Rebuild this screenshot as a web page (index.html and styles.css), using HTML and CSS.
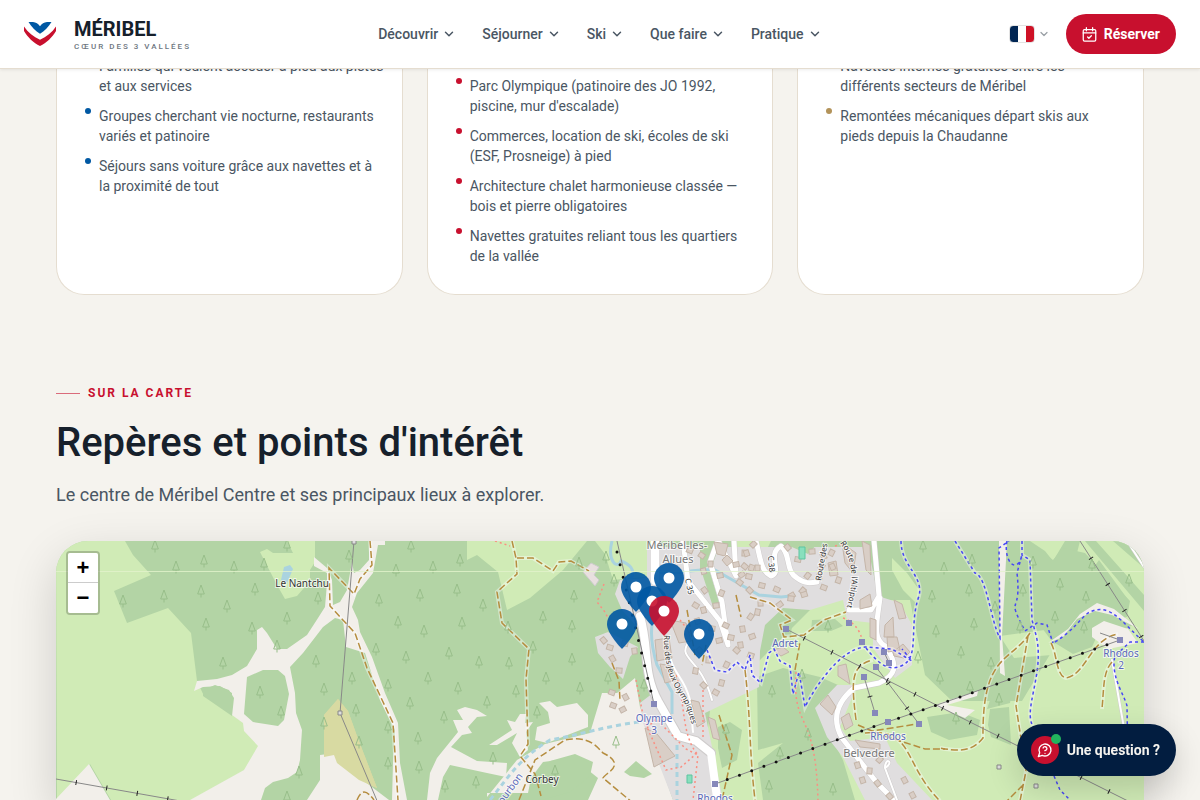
FILE: index.html
```html
<!DOCTYPE html>
<html lang="fr">
<head>
<meta charset="utf-8">
<meta name="viewport" content="width=device-width, initial-scale=1">
<title>Méribel – Cœur des 3 Vallées</title>
<link rel="stylesheet" href="styles.css">
</head>
<body>
<svg class="defs" aria-hidden="true">
  <symbol id="chevron" viewBox="0 0 24 24"><path d="m6 9 6 6 6-6" fill="none" stroke="currentColor" stroke-width="2.500" stroke-linecap="round" stroke-linejoin="round"/></symbol>
  <symbol id="pin" viewBox="0 0 30 40"><path d="M15 0C7 0 0 6.700 0 15c0 10 15 25 15 25s15-15 15-25C30 6.700 23 0 15 0z" fill="currentColor" fill-opacity=".9"/><circle cx="15" cy="15" r="5.500" fill="#fff"/></symbol>
</svg>

<header class="header">
  <a class="brand" href="#">
    <svg class="brand-mark" viewBox="0 0 32 24" aria-hidden="true">
      <path d="M4.500 0H9c3 .2 5.200 1.800 7 4.200C17.800 1.800 20 .2 23 0h4.500C24.500 5 20.500 8.800 16 11.800 11.500 8.800 7.500 5 4.500 0z" fill="#0058a3"/>
      <path d="M0 4.500c4 6 9.500 10 16 13.200 6.500-3.200 12-7.200 16-13.200v4.500C28.500 15 22.500 21 16 24 9.500 21 3.500 15 0 9z" fill="#c8102e"/>
    </svg>
    <span class="brand-text"><span class="brand-name">MÉRIBEL</span><span class="brand-tag">CŒUR DES 3 VALLÉES</span></span>
  </a>
  <nav class="nav" aria-label="Navigation principale">
    <button class="nav-item" type="button">Découvrir<svg class="chev"><use href="#chevron"/></svg></button>
    <button class="nav-item" type="button">Séjourner<svg class="chev"><use href="#chevron"/></svg></button>
    <button class="nav-item" type="button">Ski<svg class="chev"><use href="#chevron"/></svg></button>
    <button class="nav-item" type="button">Que faire<svg class="chev"><use href="#chevron"/></svg></button>
    <button class="nav-item" type="button">Pratique<svg class="chev"><use href="#chevron"/></svg></button>
  </nav>
  <div class="actions">
    <button class="lang" type="button" aria-label="Langue : français"><span class="flag"></span><svg class="chev chev-small"><use href="#chevron"/></svg></button>
    <a class="book" href="#"><svg class="book-icon" viewBox="0 0 24 24" fill="none" stroke="currentColor" stroke-width="2" stroke-linecap="round" stroke-linejoin="round" aria-hidden="true"><path d="M7 1v5M17 1v5M2 9.500h20"/><rect x="2" y="4" width="20" height="18.500" rx="2"/><path d="m9 16 2 2 4-4"/></svg>Réserver</a>
  </div>
</header>

<main class="page">
  <section class="cards">
    <article class="card card-blue">
      <ul class="list">
        <li>Familles qui veulent accéder à pied aux pistes et aux services</li>
        <li>Groupes cherchant vie nocturne, restaurants variés et patinoire</li>
        <li>Séjours sans voiture grâce aux navettes et à la proximité de tout</li>
      </ul>
    </article>
    <article class="card card-red">
      <ul class="list">
        <li>Parc Olympique (patinoire des JO 1992, piscine, mur d'escalade)</li>
        <li>Commerces, location de ski, écoles de ski (ESF, Prosneige) à pied</li>
        <li>Architecture chalet harmonieuse classée — bois et pierre obligatoires</li>
        <li>Navettes gratuites reliant tous les quartiers de la vallée</li>
      </ul>
    </article>
    <article class="card card-gold">
      <ul class="list">
        <li>Navettes internes gratuites entre les différents secteurs de Méribel</li>
        <li>Remontées mécaniques départ skis aux pieds depuis la Chaudanne</li>
      </ul>
    </article>
  </section>

  <section class="places">
    <p class="eyebrow">SUR LA CARTE</p>
    <h2 class="title">Repères et points d'intérêt</h2>
    <p class="lead">Le centre de Méribel Centre et ses principaux lieux à explorer.</p>
    <div class="map">
      <svg class="map-canvas" viewBox="56 541 1088 259" preserveAspectRatio="xMinYMin slice" role="img" aria-label="Carte de Méribel Centre">
        <defs>
          <marker id="tree" viewBox="-6 -8 12 16" markerWidth="12" markerHeight="16" markerUnits="userSpaceOnUse"><path d="M0-6 3.300 3h-6.600zM0 3v3.500" fill="none" stroke="#98be8a" stroke-width="1"/></marker>
          <marker id="station" viewBox="-3 -3 6 6" markerWidth="6" markerHeight="6" markerUnits="userSpaceOnUse"><path d="M-3-3h6v6h-6z" fill="#8688ba"/></marker>
          <marker id="house" viewBox="-4 -4 8 8" markerWidth="8" markerHeight="8" markerUnits="userSpaceOnUse" orient="auto"><path d="M-3-2h6v5h-6z" fill="#d9cec6" stroke="#c4b5a8" stroke-width="1"/></marker>
          <marker id="pylon" viewBox="-3 -3 6 6" markerWidth="6" markerHeight="6" markerUnits="userSpaceOnUse"><path d="M-2-2h4v4h-4z" fill="#ddd" stroke="#888"/></marker>
          <path id="rue-jeux" d="M664 635C663 660 670 680 678 692S689 712 692 727"/>
          <path id="route-altiport" d="M840 543C851 558 856 575 847 606"/>
        </defs>
        <path class="forest" d="M0 500h1300v400H0z"/>

        <g class="grass">
          <path d="M56 541h69l8 14 18 20-37 16 13 32 41-15 23 25 6 48 7 15 29 19 11 8 1 8 14 15-14 24-54 30h-80l-21-36-33 36z"/>
          <path d="M287 541h28v21l-5 8v11l-13 15-12 3-8-14-17-33 7-3 6 4h20z"/>
          <path d="M467 541h120l-24 29-33 28-23 12-9-38-21-17-10 5z"/>
          <path d="M595 541h60v35l-42 4-8-26z"/>
          <path d="M710 710l50-50 60-60h90l15 75 27 26h70l30-50 130-50v200H700z"/>
          <path d="M731 541h40l-20 40-15-15zM892 558l15 15 13 18-5 11-12-12-11-20z"/>
          <path d="M1030 541h35l-12 20-8-10zM1080 541h64v90l-20-8 5-22-30-41-20 28-10-3z"/>
          <path d="M1000 636l60-8 84-10v30l-130 10z"/>
        </g>
        <g class="forest">
          <path d="M1003 541h25l25 19 10-12 22 5 45 48-3 16-32-3-18 16-23 14-15-20-12 2-24 7z"/>
          <path d="M1085 541h11l48 54v16zM1113 541h18l13 15v12z"/>
          <path d="M1055 643l13-10 20-20 17-4 28 16-10 5-22-3-9 20-19 7zM993 691l20-4-3 16-23 6zM990 709l19-2 2 38-20-8-3-12z"/>
          <path d="M783 668l37 9 18 8-21 25 26 50 12 40h-92l-5-37 25-20-25 7-1-73zM812 620l23-1 8 7-12 5h-20z"/>
          <path d="M718 727l12-5 12 8-5 30-15 8-4-20zM927 717l33-5 20 8-3 15-28 5-18-8zM776 618l17-10-2 30-18-5z"/>
        </g>
        <path d="M324 715l14-16 10 12 9 25 20 52-15-6-30-23z" fill="#d8daa2"/>

        <g class="bare">
          <path d="M56 799l33-35 21 36H56zM197 681l20-2 15-4 15-9 10-17v-19l5-3 5 6 10 16h10l20-14 11-17 7-11 2-24v-10l-13-7v-9l13 11 5 12 1 25 7-3 7-12 5-28 2 11 6-3 9-10v-19h16v4h-7l-5 28-16 20-5 14 6 13 2 12 12 25 13 36 13 30 2 40 7 37h-15l1-37 2-33-15-30-15-47-19-6-3-27-8-2-12 9-20 26-13 14 5 26 1 20 6 17-2 30-3 12-9 6-15 4-8 6-4 12h-71l54-30 14-24-14-15-1-8-11-8v-22l-12-7-17 1-9 4z"/>
          <path d="M393 803h-88l15-23v-25l8-1 12 2 12 16z"/>
          <path d="M457 710l8-3 12 3 10 6-10 1-9 10 4 6-10 2-11 12 26 14 30 2-1 14-19-4-37-8-7 12-5 23h-11l3-27 7-15 21-26-5-12h10z"/>
          <path d="M489 745l23-15-5-10 8 2 5-8h6l-1 9 8-1-7 10 2 18-8 7-8-14 5-10-20 12zM539 703l11-2 7 6 20-4 11 12v12l-41 16-12-3 2-13 13-4-2-11z"/>
          <path d="M487 797l30-37 28-16 45-11 12-40h15l18-15 5 29 33 93H588l10-22-25-20-30 4-12 16-3 15h-41z"/>
          <path d="M999 541h8l-5 95 3 40-5-3zM940 703l38-12-1 5-30 9 28 5-10 8-30-12z"/>
          <path d="M1048 643l20-14 12-15 17-11 17 6 25 20-27-14-17-4-18 8-14 18zM1092 628l12-7 24 8 10 14-30 6-16-12z"/>
        </g>
        <path class="forest" d="M203 690l12-5 14 5 5 8-2 18-29-20zM247 677l16-7h15l7 6 4 18-5 26-6 6-25-4-9-8zM550 761l25-7 18 8-3 14-20 16-28 8h-14l5-18zM624 772l12-11 16 13-8 4-14-2z"/>
        <path d="M324 715l14-16 10 12 9 25 20 52-18-8-22-17-3-8-10 2z" fill="#d8daa2"/>

        <g fill="#e0dedf">
          <path d="M620 580l-5 14 7 16 18 20v20l13 43-13 10 3 20 30 77h50l-18-87 54-26 1-36 5-26 18-17 27 2 33-10 4 20 26 3 0 25 22 30 17-13v-40l-12-22-22-7-10-49H647v31z"/>
          <path d="M595 637l13-5 30 15-8 10-7 22-13-12-12-14zM815 708l22-23h20l-17 42 10 14 35-4 12 26 35 37h-67l-22-43-16-20z"/>
        </g>
        <path class="forest" d="M700 541h21l-8 22-13 8zM702 573l7-4 10 33-5 8zM778 541h42l-12 13z"/>
        <path class="water" d="M612 541c-5 20 5 29 9 20 8 3 15 8 10 18M655 571c20 6 35-3 60-1l14 8 30 17 22 2 10-1M652 625c-2 15 2 30 5 40l15 27v22"/>
        <path d="M284 567l6-2 3 4-6 14-6-3z" fill="#aad3df"/>
        <path class="water-dash" d="M490 800c20-25 30-42 60-60 25-4 60-15 90-18M677 745v55"/>

        <path class="roads-case" d="M683 541l5 40 32 40 8 24-6-43-12-40 8-22 18 36-2-35M756 541c5 20 5 30 15 35 12-3-5-22 10-30 10 8 4 25 16 32 8 6 14 5 20 4M874 541l5 55-8 14h-22M880 598c-3 25-8 40 5 48 15 20 10 30-6 37l-25 5c-18 15-22 32-12 50l35 45 20 20"/>
        <path class="roads" d="M683 541l5 40 32 40 8 24-6-43-12-40 8-22 18 36-2-35M756 541c5 20 5 30 15 35 12-3-5-22 10-30 10 8 4 25 16 32 8 6 14 5 20 4M874 541l5 55-8 14h-22M880 598c-3 25-8 40 5 48 15 20 10 30-6 37l-25 5c-18 15-22 32-12 50l35 45 20 20"/>
        <path class="roads-case lane" d="M690 640c-15 20 10 15 22 60M885 768c0-12 10-6 0 0l12 32M1112 660l12 68M1127 541l17 26"/>
        <path class="roads lane" d="M690 640c-15 20 10 15 22 60M667 640c5 40 15 30 23 60l3 32M885 768c0-12 10-6 0 0l12 32M1112 660l12 68M1127 541l17 26"/>
        <path class="roads-case valley" d="M640 616c10 35 2 55 18 85l20 35 18 5 15 12"/>
        <path class="roads valley" d="M655 541v40M640 616c10 35 2 55 18 85l20 35 18 5 15 12 8 60"/>

        <g class="building">
          <path d="M655 640l14-2 3 20-15 3zM660 664l12 2 5 14-12 3zM645 728l12 6 18 22-8 4-13 7zM691 700l8 2 6 20-8 5zM670 620l16 3 5 18-12 2zM722 560l5-5 6 6-6 5zM714 542l14 2-3 12-8-2zM828 563l8-2 2 14-8 1zM842 543l14 10-3 20-8-10zM862 541l8 4 1 30-5-5zM860 600l10-6 2 12-12 3zM885 625l8-8 1 20h-10zM894 600l8 4 4 14-7 1zM893 652l10-8 7 8-6 6-10-2zM838 666l8-2 4 20-12-8zM820 704l8-9 8 12-4 8zM841 718l8-5 4 12-8 5zM855 740l25 4v5l-20-2zM708 717l7 3 5 20-7-2zM773 650l10-3 6 5-8 4zM870 618l6 2v20l-6-3zM887 637h10l3 13-12 2z"/>
          <path fill="none" stroke="none" marker-start="url(#house)" marker-mid="url(#house)" marker-end="url(#house)" d="M604 640l6 7 15-4 10 8-16 20-7-12M612 692l14 5-3 13-10-4M690 550l12 5 9 9-7 7 16 4 16-11 9 2 4 10 8-8-13-15 9-9M696 605l8 5-6 11 14 7 14-3 11 25 14 5M705 590l11 15 5-12M740 582l10 8 11 13-10 14-8 12 9 7 5-24M788 547l10 12 14-8 12 5-2 11-14 9-5 15-11 5-12 9M747 553l5 15-10 7M762 585l15 4 14 9 13-4M700 650l9 10-13 11 8 14 12 7M719 640l12-3 10 8-14 20-5 18M832 553l-12 24 4 10 14-7-6-13M880 760l-10 11 8 12 12 13M858 765l5 15M905 780l8 15"/>
        </g>
        <path d="M583 572l8-9 8 4-5 8 5 5-4 6z" fill="#e8dfdf" stroke="#ccc"/>
        <path d="M799 547h6v12h-6zM687 775h5v8h-5z" fill="#88dfbd" stroke="#5cc5a1"/>

        <g class="trail-glow"><path d="M370 541l2 24-12 14-6 15-25-26 1 38 25 27 12 35 26 55 5 77M512 541l4 17 1 16-20 18 5 31 27 26-3 30 2 65-8 12M517 558h16l20 13 6-9 12-1 18 10M750 597l20 6 22 17-12 5 4 12 20-2 20-15 22-8M745 670c6 50 4 80 10 130M856 720c-5-40-5-55 17-60M865 733c50-5 37 30 75 68M1030 633c-20 30-48 20-47 105-12 15-26 13-43 10M1028 636l-12 70 10 65-6 30M1051 643c6 10 5 33 15 35 20-3 25-40 52-44M1112 662c-9 10-8 25-10 47"/>
          <path d="M707 650l8 20 12 2 10-10 8 8 5-15 2 20 9 8 8-30 5-4 6 12 10 5 3 28 6-22 6 35c10-20 35-58 60-60l27 2 20 12M866 648c8 10 20 25 35 18 20-8 7-40 18-70 5-20-18-30-18-55M955 541l20 32c12 3 16 50 25 65M1022 541v14l8 5 2 60 4 15c10 40-17 80 0 95l5 15"/></g>
        <g class="trail">
          <path d="M370 541l2 24-12 14-6 15-25-26 1 38 25 27 12 35 26 55 5 77M512 541l4 17 1 16-20 18 5 31 27 26-3 30 2 65-8 12 15 18 6 22M517 558h16l20 13 6-9 12-1 18 10M519 800l16-40 30-20c24-5 32 7 38 13 25 12 2 20 0 25l30 25"/>
          <path d="M750 597l20 6 22 17-12 5 4 12 20-2 20-15 22-8 M795 670l5-28M745 670c6 50 4 80 10 130M856 720c-5-40-5-55 17-60M858 725l14 6 45-7M865 733c50-5 37 30 75 68M885 736l40 13h20"/>
          <path d="M1030 633c-20 30-48 20-47 105-12 15-26 13-43 10M1028 636l-12 70 10 65-6 30M1051 643c6 10 5 33 15 35 20-3 25-40 52-44M1112 662c-9 10-8 25-10 47M1023 785l-18 18M357 800c5-12 10-9 17 0M612 663l7 18 1 20M719 715l13 40-10 45M687 610l8 45M736 595l5 22M706 645l-4 20"/>
        </g>
        <g class="foot">
          <path d="M495 541l15 5M604 584l-7 18 8 10 5 10M636 680l8 40 22 50 15-3 15-13-10-5-30-30-10 10M680 620l13 16M676 675c10 30 5 60 22 80l-5 45M843 618c15 5 20 20 19 25M796 672c-4 60 20 35 22 130M835 546l10-2M703 690v50"/>
        </g>
        <g class="piste">
          <path d="M707 650l8 20 12 2 10-10 8 8 5-15 2 20 9 8 8-30 5-4 6 12 10 5 3 28 6-22 6 35c10-20 35-58 60-60l27 2 20 12-10-12M866 648c8 10 20 25 35 18 20-8 7-40 18-70 5-20-18-30-18-55M955 541l20 32c12 3 16 50 25 65l-1-90 10-7M1007 541c-4 20 10 35 15 14l-5 18c5 45-12 20 8 58l12-8 10 2 6 18M1055 642c19-12 24-22 33-29 22-12 34 10 56 29M1022 541v14l8 5 2 60 4 15c10 40-17 80 0 95l5 15M1144 642h-14l-15 14c-5 20 10 40 12 50l1 60M1054 776l6 14 10 10"/>
        </g>

        <path class="line" d="M354 541l-14 172 38 90M56 779l130 23M786 629l174 88 180 90M1080 541l64 100M864 677l11 36M876 667l43 57M1100 633l20 7M617 541l37 163M715 784l152-55 93-32 160-57M884 652l5 11"/>
        <g class="ticks"><path d="M56 779l130 23M786 629l174 88 180 90M1080 541l64 100M864 677l11 36M876 667l43 57"/></g>
        <g class="dots"><path d="M617 552l37 152M715 784l152-55 93-32 160-57"/></g>
        <path fill="none" marker-start="url(#tree)" marker-mid="url(#tree)" marker-end="url(#tree)" d="M155 546L176 567 204 561 234 567 264 564 287 545 123 601 164 596 201 591 255 589 318 598 227 606 206 624 252 628 287 618 277 646 223 663 316 661 260 692 281 712 324 689 324 723 299 772 287 797 411 546 349 556 396 570 433 567 460 560 379 600 420 595 457 590 483 605 398 622 462 623 424 631 508 627 533 647 543 617 574 596 579 563 572 626 376 649 449 653 406 657 479 662 509 663 572 659 352 678 428 678 388 685 458 688 546 678 516 691 487 702 580 688 410 703 356 710 444 717 388 727 359 742 418 738 537 712 388 763 419 767 493 758 445 786 476 782 555 771 606 557 614 580 608 678 644 685 616 742 726 730 923 546 944 568 932 596 936 631 918 657 940 678 772 691 802 675 808 734 780 753 769 786 833 789 828 626 972 560 969 590 1033 562 1023 590 1060 584 995 607 1086 597 1055 617 974 624 1084 627 1020 627 961 652 991 663 999 699 970 687 956 718 1092 565 1129 580"/>
        <path fill="none" marker-start="url(#station)" marker-mid="url(#station)" marker-end="url(#station)" d="M786 629L849 623 862 642 884 652 889 663 876 667 864 677 875 713 888 722 919 724 654 704 715 784 1120 640"/>
        <path fill="none" marker-start="url(#pylon)" marker-mid="url(#pylon)" marker-end="url(#pylon)" d="M354 542L340 713 999 767 1036 786"/>
        <path d="M56 571.500h1088" stroke="#e2f3cc" stroke-opacity=".8"/>

        <g class="labels">
          <text x="302" y="587">Le Nantchu</text><text x="542" y="783">Corbey</text>
          <g class="district"><text x="677" y="549">Méribel-les-</text><text x="678" y="563">Allues</text><text x="869" y="757">Belvedere</text></g>
          <g class="lift"><text x="785" y="647">Adret</text><text x="654" y="722">Olympe</text><text x="654" y="734">3</text><text x="715" y="802">Rhodos</text><text x="888" y="740">Rhodos</text><text x="1121" y="657">Rhodos</text><text x="1121" y="669">2</text><text transform="translate(511 793) rotate(-54)">Bourbon</text></g>
          <g class="street"><text><textPath href="#rue-jeux">Rue des Jeux Olympiques</textPath></text><text><textPath href="#route-altiport">Route de l'Altiport</textPath></text><text transform="translate(821 581) rotate(-80)">Route des</text><text transform="translate(685 579) rotate(78)">C 35</text><text transform="translate(768 556) rotate(85)">C 38</text></g>
        </g>
      </svg>
      <button class="pin" type="button" aria-label="Repère 1" style="left:598px;top:22px"><svg><use href="#pin"/></svg></button>
      <button class="pin" type="button" aria-label="Repère 2" style="left:565px;top:31px"><svg><use href="#pin"/></svg></button>
      <button class="pin" type="button" aria-label="Repère 3" style="left:581px;top:45px"><svg><use href="#pin"/></svg></button>
      <button class="pin pin-main" type="button" aria-label="Méribel Centre" style="left:593px;top:55px"><svg><use href="#pin"/></svg></button>
      <button class="pin" type="button" aria-label="Repère 4" style="left:551px;top:68px"><svg><use href="#pin"/></svg></button>
      <button class="pin" type="button" aria-label="Repère 5" style="left:628px;top:78px"><svg><use href="#pin"/></svg></button>
      <div class="zoom">
        <button type="button" aria-label="Zoom avant">+</button>
        <button type="button" aria-label="Zoom arrière">−</button>
      </div>
    </div>
  </section>
</main>

<button class="chat" type="button">
  <span class="chat-badge"><svg viewBox="0 0 24 24" fill="none" stroke="currentColor" stroke-width="2" stroke-linecap="round" stroke-linejoin="round" aria-hidden="true"><path d="M7.900 20A9 9 0 1 0 4 16.100L2 22zM9.100 9a3 3 0 0 1 5.800 1c0 2-3 3-3 3M12 17h.01"/></svg></span>
  Une question ?
</button>
</body>
</html>
```
FILE: styles.css
```css
* { box-sizing: border-box; }

body {
  margin: 0;
  height: 100vh;
  display: flex;
  flex-direction: column;
  overflow: hidden;
  background: #f5f3ee;
  color: #4a5663;
  font-family: Roboto, "Liberation Sans", sans-serif;
  font-size: 14px;
  line-height: 20px;
}

button { font: inherit; color: inherit; border: 0; background: none; padding: 0; cursor: pointer; }
a { color: inherit; text-decoration: none; }
.defs { position: absolute; width: 0; height: 0; }

.header {
  position: relative;
  z-index: 5;
  flex: none;
  display: flex;
  align-items: center;
  justify-content: space-between;
  height: 69px;
  padding: 0 24px;
  background: #fff;
  border-bottom: 1px solid #e5ddd0;
  box-shadow: 0 1px 3px rgba(0, 0, 0, .08);
}
.brand { display: flex; align-items: center; gap: 18px; }
.brand-mark { width: 32px; height: 24px; }
.brand-text { display: flex; flex-direction: column; gap: 1px; }
.brand-name { color: #16202b; font-size: 20px; font-weight: 700; line-height: 24px; }
.brand-tag { color: #6d7680; font-size: 8px; font-weight: 500; line-height: 10px; letter-spacing: 2px; }

.nav { display: flex; gap: 26px; }
.nav-item { display: flex; align-items: center; gap: 4px; font-weight: 500; }
.chev { width: 14px; height: 14px; }
.chev-small { width: 12px; height: 12px; color: #9aa0a6; }

.actions { display: flex; align-items: center; gap: 16px; }
.lang { display: flex; align-items: center; gap: 3px; }
.flag {
  width: 26px;
  height: 18px;
  border: 1px solid #e3e3e3;
  border-radius: 4px;
  background: linear-gradient(90deg, #002654 33%, #fff 33% 67%, #ce1126 67%);
}
.book {
  display: flex;
  align-items: center;
  gap: 7px;
  height: 40px;
  padding: 0 16px;
  border-radius: 20px;
  background: #c8102e;
  color: #fff;
  font-size: 14px;
  font-weight: 700;
}
.book-icon { width: 15px; height: 15px; }

.page { flex: 1; min-height: 0; display: flex; flex-direction: column; padding: 0 56px; }

.cards { flex: none; display: grid; grid-template-columns: repeat(3, 1fr); gap: 24px; margin-top: -13px; }
.card { padding: 0 28px 28px; background: #fff; border: 1px solid #e5ddd0; border-top: 0; border-radius: 0 0 28px 28px; }
.card-blue { --accent: #0058a3; padding-right: 16px; }
.card-red { --accent: #c8102e; padding-top: 20px; }
.card-gold { --accent: #b3935a; }
.list { display: grid; gap: 10px; margin: 0; padding: 0; list-style: none; }
.list li { display: flex; gap: 8px; }
.list li::before { content: ""; flex: none; width: 6px; height: 6px; margin-top: 2px; border-radius: 50%; background: var(--accent); }

.places { flex: 1; min-height: 0; display: flex; flex-direction: column; padding-top: 88px; }
.eyebrow { display: flex; align-items: center; gap: 8px; margin: 0; color: #c8102e; font-size: 12px; font-weight: 700; letter-spacing: 2px; }
.eyebrow::before { content: ""; width: 24px; height: 1px; background: #c8102e; opacity: .6; }
.title { margin: 14px 0 12px; color: #16202b; font-size: 40px; font-weight: 500; line-height: 52px; }
.lead { margin: 0 0 32px; font-size: 18px; font-weight: 400; line-height: 28px; }

.map {
  position: relative;
  flex: 1;
  min-height: 0;
  border-radius: 32px 32px 0 0;
  box-shadow: 0 16px 48px rgba(0, 0, 0, .16);
}
.map-canvas { display: block; width: 100%; height: 100%; border-radius: 32px 32px 0 0; font-family: "Noto Sans", sans-serif; }
.forest { fill: #b3d4a5; }
.grass { fill: #d0ebb6; }
.bare { fill: #f2efea; }
.building { fill: #d9cec6; stroke: #c4b5a8; }
.water { fill: none; stroke: #aad3df; stroke-width: 3; }
.water-dash { fill: none; stroke: #aad3df; stroke-width: 3; stroke-dasharray: 5 4; }
.roads, .roads-case { fill: none; stroke: #fff; stroke-width: 5; stroke-linejoin: round; stroke-linecap: round; }
.roads-case { stroke: #cfcccc; stroke-width: 6; }
.roads.lane { stroke-width: 2; }
.roads-case.lane { stroke-width: 3; }
.roads.valley { stroke-width: 8; }
.roads-case.valley { stroke-width: 10; }
.trail-glow { fill: none; stroke: #fff; stroke-opacity: .4; stroke-width: 4; }
.trail { fill: none; stroke: #b58d3f; stroke-width: 1.5; stroke-dasharray: 7 3; }
.foot { fill: none; stroke: #fa8f82; stroke-width: 1.5; stroke-dasharray: 2 3; }
.piste { fill: none; stroke: #4747f5; stroke-width: 1.5; stroke-dasharray: 3 3; }
.line { fill: none; stroke: #888; stroke-width: 1; }
.ticks { fill: none; stroke: #222; stroke-width: 5; stroke-dasharray: 1 30; stroke-dashoffset: 11; }
.dots { fill: none; stroke: #111; stroke-width: 3; stroke-linecap: round; stroke-dasharray: 0 13; }
.labels { font-size: 10px; fill: #333; text-anchor: middle; paint-order: stroke; stroke: rgba(255, 255, 255, .7); stroke-width: 2px; }
.district { font-size: 11px; fill: #777; }
.lift { fill: #5a68b8; }
.street { font-size: 8px; text-anchor: start; }

.pin { position: absolute; width: 30px; height: 40px; color: #0058a3; }
.pin svg { display: block; width: 30px; height: 40px; }
.pin-main { color: #c8102e; z-index: 1; }

.zoom {
  position: absolute;
  top: 10px;
  left: 10px;
  display: flex;
  flex-direction: column;
  border: 2px solid rgba(0, 0, 0, .2);
  border-radius: 4px;
  background-clip: padding-box;
}
.zoom button { width: 30px; height: 30px; background: #fff; color: #000; font-family: "Liberation Sans", sans-serif; font-size: 22px; font-weight: 700; line-height: 30px; }
.zoom button:first-child { border-bottom: 1px solid #ccc; border-radius: 2px 2px 0 0; }
.zoom button:last-child { border-radius: 0 0 2px 2px; }

.chat {
  position: fixed;
  right: 24px;
  bottom: 24px;
  z-index: 6;
  display: flex;
  align-items: center;
  gap: 8px;
  height: 52px;
  padding: 0 16px 0 14px;
  border-radius: 26px;
  background: #021d40;
  color: #f5f3ee;
  font-size: 14px;
  font-weight: 700;
  box-shadow: 0 12px 32px rgba(0, 0, 0, .16);
}
.chat-badge { position: relative; display: grid; place-items: center; width: 28px; height: 28px; border-radius: 50%; background: #c8102e; color: #fff; }
.chat-badge svg { width: 16px; height: 16px; }
.chat-badge::after { content: ""; position: absolute; top: -2px; right: -2px; width: 10px; height: 10px; border-radius: 50%; background: #22b35e; }
```
